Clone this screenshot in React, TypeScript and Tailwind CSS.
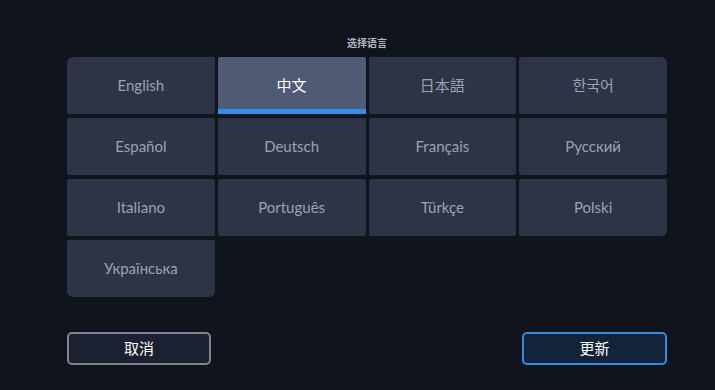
import React, { useState } from "react";

const languages = [
  "English",
  "中文",
  "日本語",
  "한국어",
  "Español",
  "Deutsch",
  "Français",
  "Русский",
  "Italiano",
  "Português",
  "Türkçe",
  "Polski",
  "Українська",
];

// corner rounding for cells on the outer edge of the grid
const corners: Record<number, string> = {
  0: "rounded-tl-[6px]",
  3: "rounded-tr-[6px]",
  11: "rounded-br-[6px]",
  12: "rounded-b-[6px]",
};

export default function App() {
  const [selected, setSelected] = useState(1);

  return (
    <div
      className="w-[715px] h-[390px] bg-[#0f141d] pl-[67px]"
      style={{ fontFamily: "Lato, 'Noto Sans CJK SC', sans-serif" }}
    >
      <div className="w-[600px] flex flex-col">
        <h1 className="mt-[36px] h-[14px] leading-[14px] text-center text-[10px] font-bold text-[#b4b9c2]">
          选择语言
        </h1>

        <div className="mt-[7px] grid grid-cols-4 gap-x-[3px] gap-y-[4px]">
          {languages.map((lang, i) => {
            const active = i === selected;
            return (
              <button
                key={lang}
                onClick={() => setSelected(i)}
                className={`relative h-[57px] rounded-[2px] flex items-center justify-center text-[15px] ${
                  corners[i] ?? ""
                } ${
                  active
                    ? "bg-[#4f5b75] text-white"
                    : "bg-[#2c3445] text-[#9ba3b1]"
                }`}
              >
                {lang}
                {active && (
                  <span className="absolute left-0 right-0 bottom-0 h-[5px] bg-[#2e91f2]" />
                )}
              </button>
            );
          })}
        </div>

        <div className="mt-[35px] flex justify-between">
          <button className="w-[144px] h-[33px] rounded-[5px] border-2 border-[#7f8590] bg-[#1b2130] text-[15px] text-white">
            取消
          </button>
          <button className="w-[145px] h-[33px] rounded-[5px] border-2 border-[#2f8de6] bg-[#13243a] text-[15px] text-white">
            更新
          </button>
        </div>
      </div>
    </div>
  );
}
